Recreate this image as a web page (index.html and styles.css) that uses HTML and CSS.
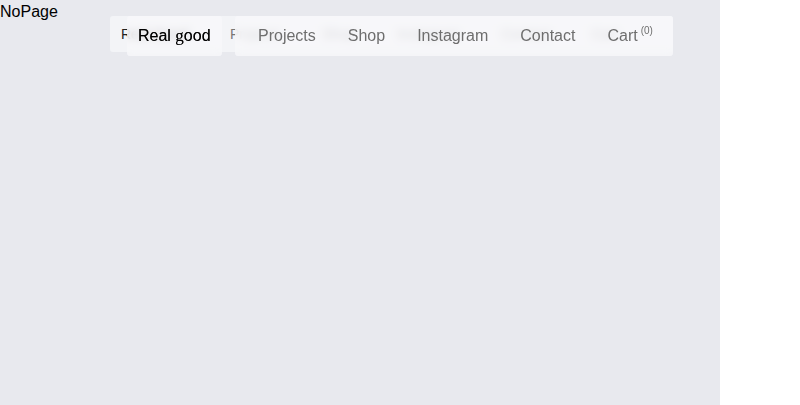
FILE: index.html
```html
<!DOCTYPE html>
<html lang="en">
<head>
<meta charset="utf-8">
<title>NoPage</title>
<link rel="stylesheet" href="styles.css">
</head>
<body>
<div class="page">
  <div class="content">NoPage</div>

  <nav class="nav-back">
    <span class="back-item">Real Good</span>
    <span class="back-item">Projects</span>
    <span class="back-item">Shop</span>
    <span class="back-item">Instagram</span>
    <span class="back-item">Contact</span>
    <span class="back-item">Cart</span>
  </nav>

  <nav class="nav-front">
    <a class="brand panel" href="#"><span class="brand-text">Real <span class="brand-g">g</span>ood</span></a>
    <div class="links panel">
      <a class="link" href="#">Projects</a>
      <a class="link" href="#">Shop</a>
      <a class="link" href="#">Instagram</a>
      <a class="link" href="#">Contact</a>
      <a class="link" href="#">Cart<sup class="count">(0)</sup></a>
    </div>
  </nav>
</div>
</body>
</html>
```

FILE: styles.css
```css
html, body {
  margin: 0;
  padding: 0;
  background: #ffffff;
}

body {
  font-family: "Liberation Sans", Arial, sans-serif;
  font-size: 16px;
  color: #000;
}

.page {
  position: relative;
  width: 720px;
  height: 405px;
  background: #e8e9ee;
}

.content {
  padding-top: 3px;
  line-height: normal;
}

.nav-back {
  position: absolute;
  top: 16px;
  left: 110px;
  width: 563px;
  height: 36px;
  box-sizing: border-box;
  padding: 0 11px;
  display: flex;
  align-items: center;
  gap: 42px;
  background: #f3f4f7;
  border-radius: 3px;
  font-size: 14px;
  color: #777;
}

.back-item:first-child {
  color: #222;
}

.nav-front {
  position: absolute;
  top: 16px;
  left: 127px;
  display: flex;
  gap: 13px;
}

.panel {
  height: 40px;
  box-sizing: border-box;
  display: flex;
  align-items: center;
  background: rgba(247, 248, 250, 0.8);
  -webkit-backdrop-filter: blur(4px);
  backdrop-filter: blur(4px);
  border-radius: 3px;
}

.brand {
  width: 95px;
  padding: 0 11px;
  color: #000;
  text-decoration: none;
  white-space: nowrap;
}

.brand-text {
  white-space: pre;
  line-height: 18px;
  text-shadow: 0 0 0.4px rgba(0, 0, 0, 0.6);
}

.brand-g {
  font-family: "Liberation Serif", "Times New Roman", serif;
  font-size: 17px;
  line-height: 0;
}

.links {
  width: 438px;
  padding: 0 23px;
  gap: 32px;
}

.link {
  color: #6e6e6e;
  text-decoration: none;
  white-space: nowrap;
}

.count {
  font-size: 10px;
  margin-left: 3px;
  vertical-align: 7px;
  line-height: 0;
}
```
